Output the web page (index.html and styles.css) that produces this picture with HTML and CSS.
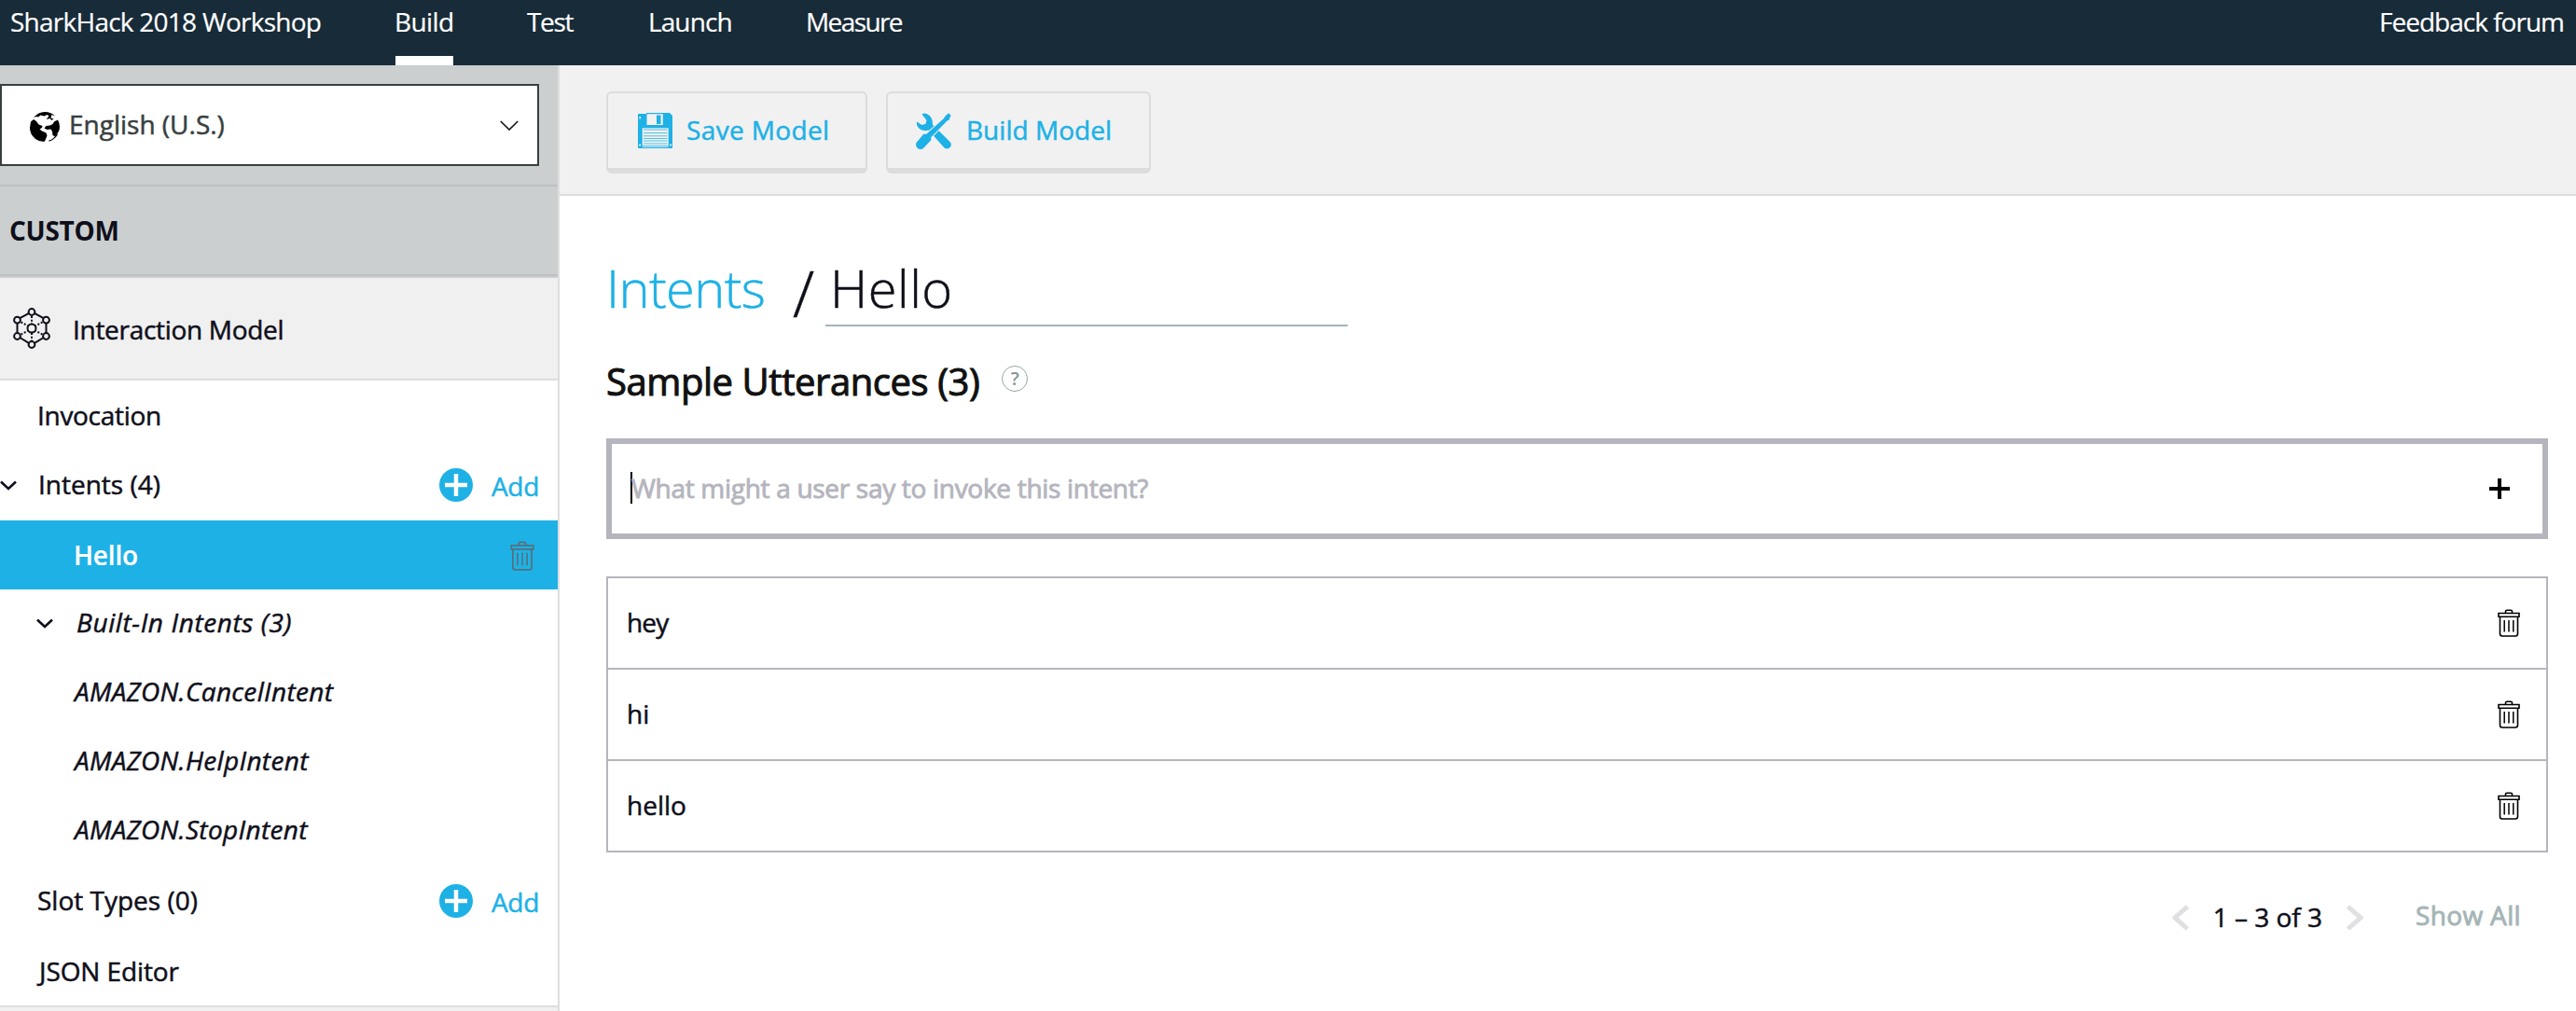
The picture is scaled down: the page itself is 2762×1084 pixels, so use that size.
FILE: index.html
```html
<!DOCTYPE html>
<html lang="en">
<head>
<meta charset="utf-8">
<title>SharkHack 2018 Workshop</title>
<link rel="stylesheet" href="styles.css">
</head>
<body>
<svg class="sprite" aria-hidden="true">
  <symbol id="trash" viewBox="0 0 24 30">
    <path d="M8.500 4V2.600Q8.500 1.200 10 1.200h4Q15.500 1.200 15.500 2.600V4M1 4.500h22v3.800H1zM2.500 9v17.500Q2.500 29 5 29h14Q21.500 29 21.500 26.500V9" fill="none" stroke="currentColor" stroke-width="1.600"/>
    <path d="M7.200 12v12.500M12 12v12.500M16.800 12v12.500" stroke="currentColor" stroke-width="1.500"/>
  </symbol>
  <symbol id="plus-circle" viewBox="0 0 36 36">
    <circle cx="18" cy="18" r="18" fill="#1eb1e6"/>
    <path d="M18 6v24M6 18h24" stroke="#fff" stroke-width="4.500"/>
  </symbol>
  <symbol id="chevron" viewBox="0 0 18 11">
    <path d="M1 1.500l8 7.500 8-7.500" fill="none" stroke="currentColor" stroke-width="2.600"/>
  </symbol>
</svg>

<header class="topbar">
  <div class="brand">SharkHack 2018 Workshop</div>
  <nav class="tabs">
    <a class="tab tab-build active">Build</a>
    <a class="tab tab-test">Test</a>
    <a class="tab tab-launch">Launch</a>
    <a class="tab tab-measure">Measure</a>
  </nav>
  <a class="feedback">Feedback forum</a>
</header>

<div class="shell">
  <aside class="sidebar">
    <div class="language">
      <div class="select">
        <svg class="globe" viewBox="0 0 32 32">
          <path d="M1 10.500L4 8l3 2 2.500 3.500 4 1.500-.500 2-2.500 1.500 2.500 2 4.500 2 1 3-2.500 6Q11 32.500 6 29 0 24 0 17z"/>
          <path d="M30 8.500l-4 2-1.500 2.500-3 1.500-4 .500-2 2.500 3 1.500 4-.500 1.500 2.500.5 4 2.500 1.500Q32 21 32 16 32 12 30 8.500z"/>
          <path d="M4 6Q9 0 16 0q7 0 11 4.500L23.500 3l-1 3.500 3 1-2 1.500-2-2-4 1 3-3.500-2-1.500-3 1.500-4-1-2.500 2-2-.5z"/>
          <path d="M20.500 31.200Q26 29.500 29.500 24" fill="none" stroke="#000" stroke-width="1.300"/>
        </svg>
        <span class="lang-name">English (U.S.)</span>
        <svg class="caret-down" viewBox="0 0 20 11"><path d="M.8 1l9.200 9 9.200-9" fill="none" stroke="#111" stroke-width="1.600"/></svg>
      </div>
    </div>
    <div class="section">CUSTOM</div>
    <div class="model">
      <svg class="network" viewBox="0 0 40 44">
        <g fill="none" stroke="#0f0f1a" stroke-width="2">
          <path d="M17 5.800L7.300 11.200M23 5.800l9.700 5.400M4.500 16.500v10M35.500 16.500v10M7.300 32l9.700 5.800M32.700 32L23 37.800"/>
          <path d="M20 9v8M20 27v8M8.500 15.300l7.500 4.200M31.500 15.300L24 19.500M8.500 28.700l7.500-4.200M31.500 28.700L24 24.500" stroke-dasharray="2 1.800"/>
          <circle cx="20" cy="22" r="4.500"/>
          <circle cx="20" cy="4.500" r="3.400"/><circle cx="20" cy="39.500" r="3.400"/>
          <circle cx="4.500" cy="13.200" r="3.400"/><circle cx="35.500" cy="13.200" r="3.400"/>
          <circle cx="4.500" cy="30.500" r="3.400"/><circle cx="35.500" cy="30.500" r="3.400"/>
        </g>
      </svg>
      <span>Interaction Model</span>
    </div>
    <ul class="tree">
      <li class="row first"><span class="label">Invocation</span></li>
      <li class="row raised">
        <svg class="toggle"><use href="#chevron"/></svg>
        <span class="label intents">Intents (4)</span>
        <a class="add"><svg><use href="#plus-circle"/></svg><span>Add</span></a>
      </li>
      <li class="row selected"><span class="label">Hello</span><svg class="trash"><use href="#trash"/></svg></li>
      <li class="row raised builtin">
        <svg class="toggle"><use href="#chevron"/></svg>
        <span class="label">Built-In Intents (3)</span>
      </li>
      <li class="row raised child"><span class="label">AMAZON.CancelIntent</span></li>
      <li class="row raised child"><span class="label">AMAZON.HelpIntent</span></li>
      <li class="row raised child"><span class="label">AMAZON.StopIntent</span></li>
      <li class="row"><span class="label">Slot Types (0)</span><a class="add"><svg><use href="#plus-circle"/></svg><span>Add</span></a></li>
      <li class="row last"><span class="label json">JSON Editor</span></li>
    </ul>
  </aside>

  <main class="main">
    <div class="toolbar">
      <button class="btn save">
        <svg class="disk" viewBox="0 0 37 38">
          <path d="M0 1h9V0h25l3 3v35H0z" fill="#1eb1e6"/>
          <path d="M9.500 1.200h17.300V13H9.500z" fill="#f1f1f1"/>
          <path d="M20 2.500h4.500V12H20z" fill="#1eb1e6"/>
          <path d="M4.700 16.300h28v19h-28z" fill="#f1f1f1"/>
          <path d="M6 18h25.500M6 21.500h25.500M6 24.800h25.500M6 27.500h25.500M6 30h25.500M6 33h25.500" stroke="#1eb1e6" stroke-width="1" opacity=".75"/>
          <path d="M1.200 33.500h1.800v2H1.200zM34.200 33.500H36v2h-1.800zM1.500 4h1.500v2.500H1.500zM4.700 36.300h28v.6h-28z" fill="#f1f1f1"/>
        </svg>
        <span>Save Model</span>
      </button>
      <button class="btn build">
        <svg class="tools" viewBox="0 0 38 39">
          <path d="M1 9.500L6.500 13l4-1.200L11.500 8 6.500 1.500Q8 .5 9.500.5 15 1.500 17 6.500q1.200 3 .8 6L36.500 31q2.500 3 .3 5.800-3 3.200-6.300.7L13.500 18.500Q6 20.500 2 15 .5 12.500 1 9.500z" fill="#1eb1e6"/>
          <path d="M31 4l4-3.800 2.500 2.500-2 5-2 .8L16 26.500l.5 2.500-8.500 9Q5 40.500 2 38T.5 32l8-9.500 2.500.5L30 6z" fill="#1eb1e6" stroke="#f1f1f1" stroke-width="2" paint-order="stroke"/>
        </svg>
        <span>Build Model</span>
      </button>
    </div>

    <section class="content">
      <h1 class="crumbs">
        <a class="parent">Intents</a>
        <span class="slash">/</span>
        <span class="name-field">Hello</span>
      </h1>
      <h2 class="subtitle"><span>Sample Utterances (3)</span><span class="help">?</span></h2>
      <div class="utterance-input">
        <span class="cursor"></span>
        <span class="placeholder">What might a user say to invoke this intent?</span>
        <svg class="plus" viewBox="0 0 22 22"><path d="M11 0v22M0 11h22" stroke="#000" stroke-width="4"/></svg>
      </div>
      <ul class="utterances">
        <li><span class="hey">hey</span><svg class="trash"><use href="#trash"/></svg></li>
        <li><span>hi</span><svg class="trash"><use href="#trash"/></svg></li>
        <li><span>hello</span><svg class="trash"><use href="#trash"/></svg></li>
      </ul>
      <div class="pager">
        <svg class="arrow" viewBox="0 0 18 28"><path d="M16.500 2L3 14l13.500 12" fill="none" stroke="#e0e0e3" stroke-width="5"/></svg>
        <span class="range">1 – 3 of 3</span>
        <svg class="arrow" viewBox="0 0 18 28"><path d="M1.500 2L15 14 1.500 26" fill="none" stroke="#e0e0e3" stroke-width="5"/></svg>
        <a class="show-all">Show All</a>
      </div>
    </section>
  </main>
</div>
</body>
</html>
```
FILE: styles.css
```css
* { box-sizing: border-box; }

body {
  margin: 0;
  height: 1084px;
  overflow: hidden;
  background: #fff;
  color: #0f0f1a;
  font: 400 28px/40px "Open Sans", "Noto Sans", sans-serif;
  -webkit-text-stroke: 0.5px currentColor;
}

ul { list-style: none; margin: 0; padding: 0; }
svg { display: block; flex: none; }
.sprite { display: none; }
span, a { white-space: nowrap; }

/* Top bar */
.topbar {
  display: flex;
  height: 70px;
  padding: 0 13px 0 11px;
  background: #182b38;
  color: #fff;
  line-height: 46px;
  -webkit-text-stroke-width: 0.2px;
}
.brand { width: 413px; letter-spacing: -0.75px; white-space: nowrap; }
.tabs { display: flex; gap: 79px; }
.tab { height: 70px; }
.tab.active { border-bottom: 10px solid #fff; }
.tab-build { width: 62px; letter-spacing: -0.6px; text-indent: -1px; }
.tab-test { width: 51px; letter-spacing: -1.3px; }
.tab-launch { width: 90px; letter-spacing: -0.9px; }
.tab-measure { width: 103px; letter-spacing: -1.6px; }
.feedback { margin-left: auto; letter-spacing: -1px; }

.shell { display: flex; height: 1014px; }

/* Sidebar */
.sidebar {
  width: 600px;
  flex: none;
  border-right: 2px solid #dedede;
  background: #f0f0f0;
}
.language {
  height: 130px;
  padding: 20px 20px 0 0;
  background: #cbcfcf;
  border-bottom: 2px solid #bfc1c1;
}
.select {
  display: flex;
  align-items: center;
  height: 88px;
  padding: 0 20px 0 30px;
  border: 2px solid #37403f;
  background: #fff;
  color: #37403f;
}
.globe { width: 32px; height: 32px; margin-top: 4px; }
.lang-name { margin: -2px 0 0 10px; }
.caret-down { width: 20px; height: 11px; margin-left: auto; }
.section {
  height: 98px;
  padding-left: 10px;
  line-height: 94px;
  font-weight: 700;
  letter-spacing: -0.3px;
  -webkit-text-stroke-width: 0;
  background: linear-gradient(#cbcfcf 94px, #bfc1c1 94px, #bfc1c1 96px, #cbcfcf 96px);
}
.model {
  display: flex;
  align-items: center;
  height: 110px;
  padding: 2px 0 0 14px;
  border-bottom: 2px solid #dedede;
  letter-spacing: -0.3px;
}
.network { width: 40px; height: 44px; margin: -2px 24px 0 0; }

.tree { background: #fff; border-bottom: 2px solid #dedede; }
.row {
  display: flex;
  align-items: center;
  height: 74px;
  padding: 0 20px 0 40px;
}
.row.first { height: 76px; padding-bottom: 2px; letter-spacing: -0.3px; }
.row.raised { padding-bottom: 4px; }
.row.last { height: 76px; padding-top: 2px; padding-left: 42px; }
.row .intents { margin-left: 1px; }
.toggle { width: 18px; height: 11px; margin: 2px 22px 0 -40px; }
.row .json { letter-spacing: -0.1px; }
.add {
  display: flex;
  align-items: center;
  margin-left: auto;
  color: #1eb1e6;
}
.add svg { width: 36px; height: 36px; margin: 2px 20px 0 0; }
.add span { margin-top: 3px; letter-spacing: -0.3px; }
.row.selected {
  padding: 0 25px 0 79px;
  background: #1eb1e6;
  color: #fff;
  font-weight: 600;
  letter-spacing: -0.2px;
  -webkit-text-stroke-width: 0.2px;
}
.selected .trash { width: 26px; height: 32px; margin: 2px 0 0 auto; color: #55707c; }
.row.builtin { padding-left: 79px; font-style: italic; letter-spacing: 0.6px; }
.builtin .toggle { margin-right: 25px; }
.row.child { padding-left: 80px; font-style: italic; letter-spacing: 0.33px; }

/* Toolbar */
.main { flex: 1; min-width: 0; }
.toolbar {
  display: flex;
  gap: 20px;
  height: 140px;
  padding: 28px 50px 0;
  border-bottom: 2px solid #dcdcdc;
  background: #f1f1f1;
}
.btn {
  display: flex;
  align-items: center;
  height: 88px;
  padding: 0 0 0 32px;
  border: 2px solid #dcdcdc;
  border-bottom-width: 6px;
  border-radius: 6px;
  background: #f1f1f1;
  color: #1eb1e6;
  font: inherit;
}
.btn.save { width: 280px; letter-spacing: 0.37px; }
.btn.build { width: 284px; padding-left: 30px; letter-spacing: 0.03px; }
.disk { width: 37px; height: 38px; margin-right: 15px; }
.tools { width: 38px; height: 39px; margin-right: 16px; }
.btn span { margin-top: -2px; }

/* Content */
.content { padding: 58px 30px 0 50px; }
.crumbs {
  display: flex;
  height: 82px;
  margin: 0;
  font-size: 56px;
  font-weight: 300;
  line-height: 80px;
}
.parent { width: 200px; letter-spacing: -0.6px; color: #1eb1e6; }
.slash { width: 35px; padding-top: 6px; font-size: 68px; }
.name-field {
  width: 560px;
  padding-left: 5px;
  border-bottom: 2px solid #a5b5b6;
  letter-spacing: 0.5px;
}
.subtitle {
  display: flex;
  margin: 31px 0 33px;
  font-size: 40px;
  font-weight: 500;
  line-height: 56px;
  letter-spacing: -0.43px;
  color: #111;
  -webkit-text-stroke-width: 1px;
}
.help {
  width: 28px;
  height: 28px;
  margin: 11px 0 0 24px;
  border: 1.500px solid #96a5a5;
  border-radius: 50%;
  color: #879596;
  font-size: 20px;
  font-weight: 600;
  line-height: 25px;
  letter-spacing: 0;
  text-align: center;
  -webkit-text-stroke-width: 0;
}
.utterance-input {
  display: flex;
  align-items: center;
  height: 108px;
  padding: 0 35px 0 20px;
  border: 6px solid #b5b5be;
}
.cursor { width: 2px; height: 34px; margin-top: -2px; background: #000; }
.placeholder {
  margin: -2px 0 0 -1px;
  font-weight: 500;
  letter-spacing: -0.3px;
  color: #b5b5be;
  -webkit-text-stroke-width: 0.9px;
}
.plus { width: 22px; height: 22px; margin-left: auto; }
.utterances { margin-top: 40px; border: 2px solid #b5b5be; }
.utterances li {
  display: flex;
  align-items: center;
  justify-content: space-between;
  height: 98px;
  padding: 0 28px 0 20px;
  border-bottom: 2px solid #b5b5be;
}
.utterances li:last-child { height: 96px; border-bottom: 0; }
.utterances span { margin-top: -2px; }
.utterances .trash { width: 24px; height: 30px; color: #000; }
.utterances .hey { letter-spacing: -0.8px; }

.pager {
  display: flex;
  justify-content: flex-end;
  align-items: center;
  height: 40px;
  margin-top: 50px;
  padding-right: 29px;
}
.arrow { width: 18px; height: 28px; }
.range { margin: -2px 26px 0; }
.show-all {
  margin: -6px 0 0 56px;
  font-weight: 500;
  letter-spacing: 0.35px;
  color: #a5b5b6;
  -webkit-text-stroke-width: 0.9px;
}
```
